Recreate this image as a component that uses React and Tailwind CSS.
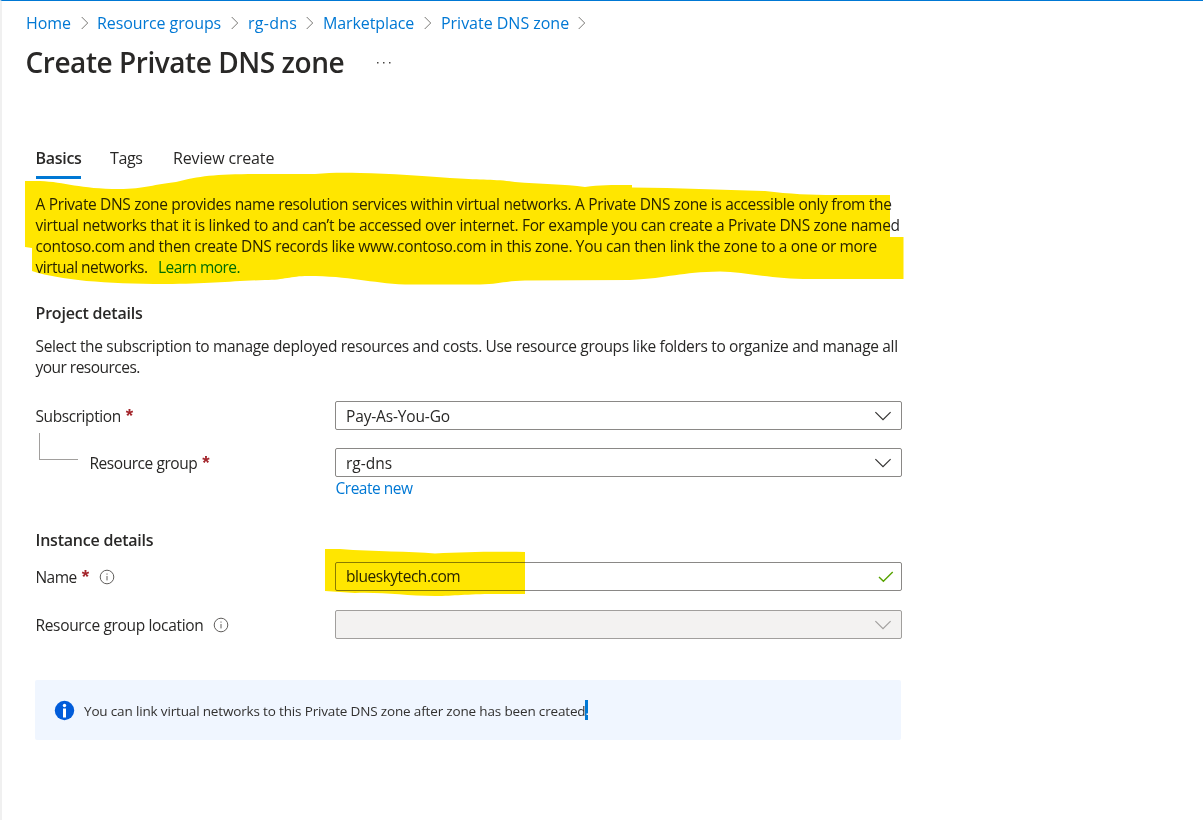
const crumbs = [
  { label: 'Home', box: 'w-[55px]', gap: 'w-[16px]', track: 'tracking-[-0.1px]' },
  { label: 'Resource groups', box: 'w-[134px]', gap: 'w-[17px]', track: 'tracking-[-0.08px]' },
  { label: 'rg-dns', box: 'w-[58px]', gap: 'w-[17px]', track: 'tracking-[0.25px]' },
  { label: 'Marketplace', box: 'w-[101px]', gap: 'w-[17px]', track: 'tracking-[-0.1px]' },
  { label: 'Private DNS zone', box: 'w-[137px]', gap: 'w-[16px]', track: 'tracking-[-0.02px]' },
];

function Chevron({ className }) {
  return (
    <svg className={className} width="18" height="10" viewBox="0 0 18 10" fill="none" stroke="currentColor" strokeWidth="1.15">
      <path d="M1.4 1.2 9 8.6 16.6 1.2" />
    </svg>
  );
}

function InfoOutline() {
  return (
    <svg width="16" height="16" viewBox="0 0 16 16" fill="none" stroke="#605e5c" className="mb-[2px] shrink-0">
      <circle cx="8" cy="8" r="6.8" strokeWidth="1" />
      <path d="M8 7v4.4M8 4.5v1.2" strokeWidth="1" />
    </svg>
  );
}

function Required() {
  return (
    <span className="mb-[5px] ml-[5px] h-[18px] w-[8px] shrink-0 font-['Liberation_Sans',sans-serif] text-[19px] leading-[22px] font-bold tracking-normal text-[#a4262c]">*</span>
  );
}

function Field({ className = 'border-[#8a8886] bg-white', children }) {
  return (
    <div className={`flex h-[29px] w-[567px] items-center justify-between rounded-[2px] border pl-[10px] ${className}`}>
      {children}
    </div>
  );
}

export default function App() {
  return (
    <div className="relative h-[820px] w-[1203px] overflow-hidden border-t border-l-2 border-t-[#0078d4] border-l-[#f0f0f0] bg-white font-['Open_Sans','Noto_Sans',sans-serif] text-[15.5px] leading-[21px] whitespace-nowrap text-[#292827]">
      <nav className="mt-[12px] ml-[24px] flex h-[21px] text-[16px] text-[#0078d4]">
        {crumbs.map((c) => (
          <div key={c.label} className="flex items-center">
            <a className={`${c.box} ${c.track}`}>{c.label}</a>
            <span className={`flex pb-[2px] ${c.gap}`}>
              <svg width="8" height="14" viewBox="0 0 8 14" fill="none" stroke="#797775" strokeWidth="1">
                <path d="M.7 1 6.7 7 .7 13" />
              </svg>
            </span>
          </div>
        ))}
      </nav>

      <header className="mt-[8px] ml-[23.5px] flex h-[40px] items-center">
        <h1 className="w-[351.5px] text-[28px] leading-[40px] font-semibold tracking-[-0.45px]">Create Private DNS zone</h1>
        <svg width="14" height="3" viewBox="0 0 14 3" fill="#484644">
          <rect x="0" y="1" width="1.5" height="1.5" />
          <rect x="6" y="1" width="1.5" height="1.5" />
          <rect x="12" y="1" width="1.5" height="1.5" />
        </svg>
      </header>

      <main className="ml-[33.5px]">
        <div className="mt-[66px] flex h-[31px] text-[16px]">
          <div className="w-[74.5px]">
            <span className="block h-[28px] font-semibold tracking-[-0.3px]">Basics</span>
            <span className="block h-[3px] w-[45px] bg-[#0078d4]" />
          </div>
          <div className="w-[63px] tracking-[-0.4px]">Tags</div>
          <div className="tracking-[-0.15px]">Review create</div>
        </div>

        <p className="mt-[15px]">
          <span className="block tracking-[-0.339px]">A Private DNS zone provides name resolution services within virtual networks. A Private DNS zone is accessible only from the</span>
          <span className="block tracking-[-0.337px]">virtual networks that it is linked to and can’t be accessed over internet. For example you can create a Private DNS zone named</span>
          <span className="block tracking-[-0.345px]">contoso.com and then create DNS records like www.contoso.com in this zone. You can then link the zone to a one or more</span>
          <span className="flex">
            <span className="w-[122.5px] tracking-[-0.5px]">virtual networks.</span>
            <a className="tracking-[-0.56px] text-[#0078d4]">Learn more.</a>
          </span>
        </p>

        <h2 className="mt-[25px] text-[16px] font-semibold tracking-[-0.2px]">Project details</h2>
        <p className="mt-[12px]">
          <span className="block tracking-[-0.337px]">Select the subscription to manage deployed resources and costs. Use resource groups like folders to organize and manage all</span>
          <span className="block tracking-[-0.52px]">your resources.</span>
        </p>

        <div className="mt-[23px] flex">
          <div className="w-[299.5px]">
            <div className="flex h-[29px] items-center pt-[2px] tracking-[-0.42px]">Subscription<Required /></div>
            <div className="mt-[3px] ml-[3.5px] flex h-[44px]">
              <span className="h-[27px] w-[39px] border-b border-l border-[#a19f9d]" />
              <span className="mt-[15px] ml-[11.5px] flex h-[29px] items-center pt-[2px] tracking-[-0.45px]">Resource group<Required /></span>
            </div>
          </div>
          <div>
            <Field><span className="pt-[2px] tracking-[-0.15px]">Pay-As-You-Go</span><Chevron className="mr-[9px] text-[#323130]" /></Field>
            <Field className="mt-[18px] border-[#8a8886] bg-white"><span className="pt-[2px]">rg-dns</span><Chevron className="mr-[9px] text-[#323130]" /></Field>
            <a className="mt-px ml-[0.5px] block tracking-[-0.48px] text-[#0078d4]">Create new</a>
          </div>
        </div>

        <h2 className="mt-[31px] text-[16px] font-semibold tracking-[-0.22px]">Instance details</h2>
        <div className="mt-[11px] flex h-[29px] items-center">
          <div className="flex w-[299.5px] items-center pt-[2px] tracking-[-0.55px]">Name<Required /><span className="w-[9px]" /><InfoOutline /></div>
          <Field>
            <span className="tracking-[-0.47px]">blueskytech.com</span>
            <svg width="16" height="12" viewBox="0 0 16 12" fill="none" stroke="#57a300" strokeWidth="1.4" className="mr-[7px]">
              <path d="M1 6 5.4 10.3 14.7 1" />
            </svg>
          </Field>
        </div>
        <div className="mt-[19px] flex h-[29px] items-center">
          <div className="flex w-[299.5px] items-center pt-[2px] tracking-[-0.335px]">Resource group location<span className="w-[10px]" /><InfoOutline /></div>
          <Field className="border-[#a19f9d] bg-[#f3f2f1]"><span /><Chevron className="mr-[9px] text-[#a19f9d]" /></Field>
        </div>

        <div className="mt-[41px] -ml-[0.5px] flex h-[60px] w-[866px] items-center rounded-[2px] bg-[#f0f6ff] pl-[19px] text-[13.5px] text-[#323130]">
          <svg width="21" height="21" viewBox="0 0 21 21" className="mr-[9px]">
            <circle cx="10.5" cy="10.5" r="9.7" fill="#015cda" />
            <circle cx="10.5" cy="5.5" r="1.7" fill="#fff" />
            <path d="M9 8.5h3v9H9z" fill="#fff" />
          </svg>
          <span className="pt-[2px] tracking-[-0.16px]">You can link virtual networks to this Private DNS zone after zone has been created</span>
          <span className="h-[20px] w-[3px] overflow-hidden bg-[#0078d4] text-white">.</span>
        </div>
      </main>

      <svg className="pointer-events-none absolute -top-px -left-[2px] mix-blend-multiply" width="1203" height="820" viewBox="0 0 1203 820" fill="#ffe600">
        <path d="M25 181H40C65 182 80 189 119 189C145 189 155 184 176 182C200 176 215 174 260 174H315C330 172.500 345 172.500 360 173C390 173.500 425 176 450 178C480 180 495 179 515 182C540 184 565 184 585 187C600 185 610 185 632 185V187.500C680 188 720 190 765 191C790 194 810 195 835 195H890V237H903.500V279H810C770 279 745 272 720 271.500C680 272 670 278 630 280L525 280.500C505 281 500 284 480 284.500H405C370 283 350 276 308 276C290 276 285 280 265 280C230 281 210 284 165 284C105 284 60 280 32 271V248L25 247Z" />
        <path d="M325 549H340C375 552 410 551 435 553.500C465 552 490 551.500 525 552V594H495C465 594 455 596 435 596C405 596 385 592 355 593L325 591Z" />
      </svg>
      <span className="absolute top-[206px] -left-[2px] h-px w-[2px] bg-[#d6d6d6]" />
    </div>
  );
}
